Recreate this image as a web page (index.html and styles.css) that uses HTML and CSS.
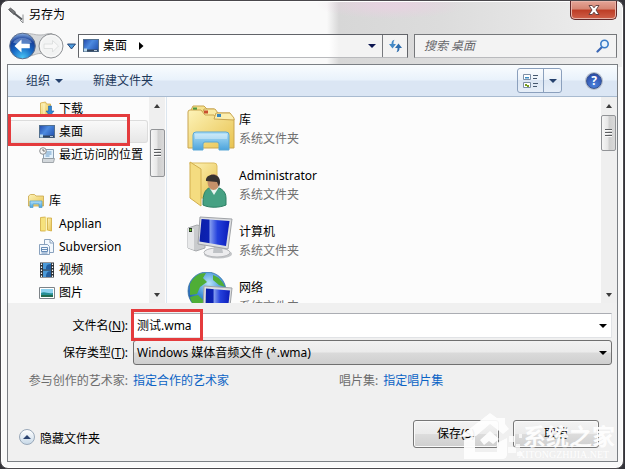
FILE: index.html
```html
<!DOCTYPE html>
<html lang="zh-CN">
<head>
  <meta charset="UTF-8" />
  <meta name="viewport" content="width=device-width, initial-scale=1.0" />
  <title>另存为</title>
  <link rel="stylesheet" href="styles.css">
</head>
<body>
  <!-- gradients and icons used more than once -->
  <svg class="defs" width="0" height="0">
    <defs>
      <linearGradient id="folder" x1="0" y1="0" x2="1" y2="1">
        <stop offset="0" stop-color="#fdf3b8" /><stop offset="1" stop-color="#e8c350" />
      </linearGradient>
      <linearGradient id="screen" x1="0" y1="0" x2="1" y2="0.6">
        <stop offset="0" stop-color="#2348a8" /><stop offset="0.5" stop-color="#4d8be0" /><stop offset="1" stop-color="#2a5cb8" />
      </linearGradient>
      <linearGradient id="monitor" x1="0" y1="0" x2="1" y2="0">
        <stop offset="0" stop-color="#0a1fa8" /><stop offset="0.3" stop-color="#0c22b4" /><stop offset="0.36" stop-color="#7f98ee" /><stop offset="0.6" stop-color="#2440dc" /><stop offset="1" stop-color="#0b1cb8" />
      </linearGradient>
      <linearGradient id="tray" x1="0" y1="0" x2="0" y2="1">
        <stop offset="0" stop-color="#b5e2f8" /><stop offset="1" stop-color="#4ba3dc" />
      </linearGradient>
      <radialGradient id="backBlue" cx="0.5" cy="0.95" r="0.95">
        <stop offset="0" stop-color="#48c4f4" /><stop offset="0.45" stop-color="#1767c4" /><stop offset="0.75" stop-color="#173f98" /><stop offset="1" stop-color="#8db2e4" />
      </radialGradient>
      <radialGradient id="globe" cx="0.55" cy="0.3" r="0.75">
        <stop offset="0" stop-color="#b8e4fa" /><stop offset="0.5" stop-color="#3f8fd8" /><stop offset="1" stop-color="#1a4d9c" />
      </radialGradient>
      <symbol id="desktop" viewBox="0 0 16 14">
        <rect x="0.5" y="0.5" width="15" height="12" fill="url(#screen)" stroke="#53708f" />
        <path d="M1 10.5h14v2H1z" fill="#33465e" />
        <path d="M1 9.500h3v3H1z" fill="#b9d9ee" />
        <path d="M11 11.500h3" stroke="#b8c8d8" />
      </symbol>
      <symbol id="computer" viewBox="0 0 48 44">
        <path d="M1 12l9-3 8 2v21l-9 3-8-3z" fill="#c9cbcd" stroke="#a6a9ac" />
        <path d="M1 12l6 1v21l-6-2z" fill="#e8e9ea" />
        <path d="M2 12h3v4H2z" fill="#263526" /><circle cx="3.500" cy="14" r="1" fill="#7edb3a" />
        <ellipse cx="31" cy="38" rx="14" ry="4.500" fill="#c3c5c8" />
        <ellipse cx="30" cy="36.500" rx="13" ry="4.500" fill="#ececee" stroke="#b4b6b9" />
        <path d="M27 29l8 2 1 6h-10z" fill="#bfc2c6" />
        <path d="M13 1l32 2-4 30-30-5z" fill="#dcdee1" stroke="#a0a3a7" />
        <path d="M14.500 3l28 2-3.500 25-26.500-4.500z" fill="url(#monitor)" />
      </symbol>
    </defs>
  </svg>

  <div class="window">
    <div class="titlebar">
      <svg class="mic" width="18" height="18" viewBox="0 0 18 18">
        <path d="M3 3l12 9.500" stroke="#55585c" stroke-width="2" />
        <path d="M1.500 2.500l2-1.500 5 4-1.500 2.500z" fill="#77797c" stroke="#3e4043" stroke-width="0.6" />
        <path d="M16 7.500v8.500l-3-3" stroke="#8b8e91" fill="none" />
      </svg>
      <span class="title">另存为</span>
      <button class="close" aria-label="关闭">
        <svg width="12" height="10" viewBox="0 0 12 10">
          <path d="M1 .5h3.200L6 2.800 7.800.5H11L8 5l3 4.500H7.800L6 7.200 4.200 9.500H1L4 5z" fill="#fff" stroke="#5a3a3a" stroke-width="0.9" />
        </svg>
      </button>
    </div>

    <div class="navbar">
      <svg class="nav-buttons" width="69" height="28" viewBox="0 0 69 28">
        <path d="M14 1.500c13 0 12 1.500 18 1.500s5-1.500 12-1.500v23c-7 0-7-3-12-3s-6 3-18 3z" fill="#d7d9db" stroke="#b3b5b8" />
        <circle cx="14.500" cy="14" r="12.800" fill="url(#backBlue)" stroke="#5b6c88" />
        <path d="M5 10.500a10.500 8 0 0 1 19 0c-5 2-14 2-19 0z" fill="#a9c4ec" opacity="0.45" />
        <path d="M6.500 14l7-6.500v4.300h8.300v4.400h-8.300v4.300z" fill="#fff" />
        <circle cx="43" cy="14" r="12" fill="#e9eaeb" stroke="#909396" />
        <circle cx="43" cy="14" r="10.500" fill="#f2f3f3" stroke="#fcfcfc" />
        <path d="M50.500 14l-6-5.500v3.500H36v4.500h8.500v3.500z" fill="#f8f8f8" stroke="#d8dadb" stroke-width="0.8" />
        <path d="M59.500 12h8l-4 5z" fill="#4e9bdc" stroke="#203c6c" stroke-width="0.9" />
      </svg>
      <div class="address">
        <svg width="16" height="14"><use href="#desktop" /></svg>
        <span class="crumb">桌面</span>
        <svg width="5" height="8" viewBox="0 0 5 8"><path d="M0 0l4.500 4L0 8z" fill="#000" /></svg>
        <i class="arrow navy address-arrow"></i>
        <span class="refresh">
          <svg width="15" height="14" viewBox="0 0 15 14">
            <path d="M6.500.8C4.500 1 3.500 2.500 3.500 5H1l3.500 4.500L8 5H5.500c0-2 .2-3 1-4.200z" fill="#4389c6" />
            <path d="M8.500 13.200c2-.2 3-1.700 3-4.200H14l-3.500-4.500L7 9h2.500c0 2-.2 3-1 4.200z" fill="#2e6dae" />
          </svg>
        </span>
      </div>
      <div class="search">
        <span>搜索 桌面</span>
        <svg width="14" height="14" viewBox="0 0 14 14">
          <path d="M1.500 12.500L6 8" stroke="#3a66b4" stroke-width="2.200" stroke-linecap="round" />
          <circle cx="8.500" cy="5" r="3.700" fill="#e8f3fc" stroke="#3a7cc8" stroke-width="1.600" />
        </svg>
      </div>
    </div>

    <div class="client">
      <div class="toolbar">
        <span>组织</span><i class="arrow blue"></i>
        <span class="new-folder">新建文件夹</span>
        <div class="view-button">
          <span class="view-icon">
            <svg width="16" height="16" viewBox="0 0 16 16">
              <path d="M.5 1.500h7v5h-7zM.5 9.500h7v5h-7z" fill="#fff" stroke="#7d8fa6" />
              <path d="M2 4h4v1.500H2z" fill="#3c8cc4" /><path d="M2 11h2v1h2v2H4v-1H2z" fill="#789d22" />
              <path d="M10 2.500h5M10 5.500h4M10 10.500h5M10 13.500h4" stroke="#46586e" />
            </svg>
          </span>
          <span class="view-drop"><i class="arrow blue"></i></span>
        </div>
        <span class="help">?</span>
      </div>

      <div class="browser">
        <ul class="tree">
          <li>
            <svg width="16" height="16" viewBox="0 0 16 16">
              <path d="M1.500 2l5-1 1 2h4v12h-10z" fill="url(#folder)" stroke="#d4aa42" stroke-width="0.8" />
              <path d="M5 3v12" stroke="#fff6c8" />
              <path d="M9.500 5h3v5h2.500l-4 5-4-5h2.500z" fill="#3187d2" stroke="#1f5fa6" stroke-width="0.6" />
            </svg>下载
          </li>
          <li class="selected"><svg width="16" height="14"><use href="#desktop" /></svg>桌面</li>
          <li>
            <svg width="16" height="16" viewBox="0 0 16 16">
              <path d="M4.500 2.500h10v9h-10z" fill="#e4f1fb" stroke="#8a9db0" />
              <path d="M6.500 5h6M6.500 7h6M6.500 9h4" stroke="#6b9cc8" />
              <path d="M3.500 11.500h12l-1 4h-11z" fill="#d3d8dc" stroke="#8d949b" stroke-width="0.8" />
              <circle cx="4" cy="4" r="3.300" fill="#f6f6f6" stroke="#8a8d90" /><path d="M4 2v2h2" fill="none" stroke="#555" stroke-width="0.8" />
            </svg>最近访问的位置
          </li>
          <li class="root">
            <svg width="16" height="16" viewBox="0 0 16 16">
              <path d="M.5 3l2-1.500h4L8 3h7.500v10H.5z" fill="url(#folder)" stroke="#c9a64a" stroke-width="0.8" />
              <path d="M2 8h12v6.500h-3V11H5v3.500H2z" fill="url(#tray)" stroke="#4d9ccd" stroke-width="0.7" />
            </svg>库
          </li>
          <li>
            <svg width="16" height="16" viewBox="0 0 16 16">
              <path d="M1.500 1.500l5-.5v14h-5z" fill="#f6e27c" stroke="#d0aa3c" stroke-width="0.8" />
              <path d="M6.500 1l3 .5v13.500h-3z" fill="#fdf4b8" /><path d="M8.500 2h4v13l-4-1z" fill="url(#folder)" stroke="#d0aa3c" stroke-width="0.8" />
            </svg>Applian
          </li>
          <li>
            <svg width="16" height="16" viewBox="0 0 16 16">
              <path d="M5.500.5h6l3 3v10h-9z" fill="#f3f8fd" stroke="#8aa2be" /><path d="M11 .5V4h3.500" fill="none" stroke="#8aa2be" />
              <path d="M.5 5.500h8l2 2v8H.5z" fill="#f3f8fd" stroke="#8aa2be" />
              <path d="M2.500 8.500h6v4h-6zM2.500 10.500h6M2.500 14h6" fill="none" stroke="#587fae" stroke-width="0.9" />
            </svg>Subversion
          </li>
          <li>
            <svg width="16" height="16" viewBox="0 0 16 16">
              <path d="M1 .5h14v15H1z" fill="#2d3136" />
              <path d="M4 1h8v6.500H4zM4 8.500h8V15H4z" fill="#4c9ad8" />
              <path d="M12 2c-5 0-5 3-5 5.500h5zM12 9c-4 0-5 3-5 6h5z" fill="#245e9e" />
              <path d="M2.500 1.500v14M13.500 1.500v14" stroke="#fff" stroke-width="1.200" stroke-dasharray="1.500 1.500" />
            </svg>视频
          </li>
          <li>
            <svg width="16" height="14" viewBox="0 0 16 14">
              <path d="M.5 1.500h15v11H.5z" fill="#fff" stroke="#7d8388" /><path d="M2 3h12v8H2z" fill="#8dd1ee" />
              <path d="M2 7c4-2 6 1 12 0v4H2z" fill="#268f95" /><path d="M2 9h12v2H2z" fill="#236c4f" />
            </svg>图片
          </li>
        </ul>
        <div class="scroll tree-scroll"><i class="up"></i><b class="thumb"></b><i class="down"></i></div>

        <div class="files">
          <div class="file">
            <svg width="48" height="48" viewBox="0 0 48 48">
              <path d="M4 6l2-4h11l3 3h7v10H4z" fill="#f6e28e" stroke="#c9a550" /><path d="M6 3.500h4v3H6z" fill="#4d9a41" />
              <path d="M15 10l2-5h11l3 4h12v8H15z" fill="#faeaa4" stroke="#c9a550" />
              <path d="M1 8q0-2 2-2h11l4 5h9l2 3h17l1 1v29H1z" fill="url(#folder)" stroke="#c9a550" />
              <path d="M27 15l2-6h14l4 5v2z" fill="#fbeeb0" stroke="#c9a550" />
              <path d="M17 6.500h4v3h-4z" fill="#c9502f" /><path d="M30 10h4v3h-4z" fill="#3988be" />
              <path d="M6 31q0-3 3-3h30q3 0 3 3v15H32v-6q0-2-2-2H18q-2 0-2 2v6H6z" fill="url(#tray)" stroke="#5aa7d5" />
              <path d="M8 30h32v5H8z" fill="#fff" opacity="0.35" />
            </svg>
            <div><p>库</p><p class="kind">系统文件夹</p></div>
          </div>
          <div class="file">
            <svg width="48" height="48" viewBox="0 0 48 48">
              <path d="M3 3h24q3 0 3 3v32H12z" fill="url(#folder)" stroke="#dbbb60" />
              <path d="M3 2l11 7v37L3 38z" fill="#f4dc80" stroke="#d2ae4c" />
              <path d="M16 42c0-13 6-15 11-15s12 3 12 11v7c-7 3-17 3-23 0z" fill="#46a183" stroke="#2c7e63" />
              <path d="M22 27l5 8 5-8z" fill="#e9f3ef" />
              <ellipse cx="26.500" cy="22" rx="6" ry="8" fill="#c69169" />
              <path d="M19 21c-1-8 15-9 14 2l-1 4-2-5c-4 0-7-1-11-1z" fill="#37322f" />
            </svg>
            <div><p>Administrator</p><p class="kind">系统文件夹</p></div>
          </div>
          <div class="file">
            <svg width="48" height="44"><use href="#computer" /></svg>
            <div><p>计算机</p><p class="kind">系统文件夹</p></div>
          </div>
          <div class="file">
            <svg width="48" height="48" viewBox="0 0 48 48">
              <circle cx="20" cy="19" r="19" fill="url(#globe)" stroke="#2d6a9c" stroke-width="0.7" />
              <path d="M3 12C7 4 12 1 19 1l-3 5 4 4-7 5-3 7-7 1zM26 3c6 2 10 7 12 12l-6-2-6-5zM3 25l8-2 6 6-3 7C8 35 4 31 3 25z" fill="#4fae36" />
              <path d="M17 14l28 2-3 27-26-4z" fill="#dcdee1" stroke="#a0a3a7" /><path d="M19 16.500l24 2-2.500 22-22-4z" fill="url(#monitor)" />
            </svg>
            <div><p>网络</p><p class="kind">系统文件夹</p></div>
          </div>
        </div>
        <div class="scroll file-scroll"><i class="up"></i><b class="thumb"></b><i class="down"></i></div>
      </div>

      <div class="form">
        <div class="field">
          <label>文件名(<u>N</u>):</label>
          <div class="input">测试.wma<i class="arrow"></i></div>
        </div>
        <div class="field">
          <label>保存类型(<u>T</u>):</label>
          <div class="input select">Windows 媒体音频文件 (*.wma)<i class="arrow"></i></div>
        </div>
        <div class="meta">
          <label>参与创作的艺术家:</label><a>指定合作的艺术家</a>
          <label class="album">唱片集:</label><a>指定唱片集</a>
        </div>
      </div>

      <div class="footer">
        <span class="hide-icon"><i></i></span>
        <span class="hide-text">隐藏文件夹</span>
        <div class="buttons">
          <button class="btn">保存(S)</button>
          <button class="btn">取消</button>
        </div>
      </div>
    </div>
  </div>

  <div class="mark mark-tree"></div>
  <div class="mark mark-name"></div>

  <div class="watermark">
    <svg width="68" height="48" viewBox="0 0 68 48">
      <path d="M0 24L31 0l7 5h8v6l4 5-6 5-13-10-14 12z" fill="#fff" />
      <path d="M5 27l11-4v16h22v-9l10-5v16q0 5-5 5H5z" fill="#fff" />
      <path d="M21 27l10-9 9 8-6 5-4-3-5 4z" fill="#fff" />
      <path d="M50 23h6v6h-6zM57 31h4v4h-4zM49 34h8v6h-8zM60 21h3v4h-3zM58 39h5v4h-5z" fill="#fff" opacity="0.8" />
    </svg>
    <div class="watermark-text"><strong>系统之家</strong><small>XITONGZHIJIA.NET</small></div>
  </div>
</body>
</html>
```

FILE: styles.css
```css
* {
  box-sizing: border-box;
}
html, body {
  margin: 0;
  width: 625px;
  height: 469px;
  overflow: hidden;
  background: #34343a;
  font: 12px/18px "Noto Sans", "Noto Sans CJK SC", sans-serif;
  color: #000;
}
body {
  position: relative;
}
ul, p {
  margin: 0;
  padding: 0;
  list-style: none;
}
button {
  font: inherit;
  padding: 0;
}
svg {
  display: block;
  flex: none;
}
.defs {
  position: absolute;
}
.window {
  width: 624px;
  height: 469px;
  border: 1px solid #4a484c;
  border-radius: 8px;
  padding: 0 6px 6px;
  box-shadow: inset 0 0 0 1px #fff;
  background:
    radial-gradient(ellipse 75px 14px at 390px 4px, rgba(234, 208, 226, 0.7) 20%, transparent),
    linear-gradient(90deg, transparent 326px, #d7d7d7 338px, #dcdcdc 440px, #e4e4e4 520px, #eee 610px) 0 0 / 100% 66px no-repeat,
    #f9f9f9;
}

/* title bar */
.titlebar {
  display: flex;
  align-items: flex-start;
  height: 32px;
}
.mic {
  margin: 6px 4px 0 0;
}
.title {
  margin-top: 5px;
}
.close {
  display: flex;
  align-items: center;
  justify-content: center;
  width: 47px;
  height: 19px;
  margin-left: auto;
  border: 1px solid #61292a;
  border-top: 0;
  border-radius: 0 0 5px 5px;
  background: linear-gradient(#e5a597, #d58573 45%, #bd3c25 50%, #cf604a);
  box-shadow: inset 0 0 0 1px #e8b4a9;
}

/* navigation */
.navbar {
  display: flex;
  height: 31px;
}
.nav-buttons {
  margin: -1px 0 0 1px;
}
.address {
  display: flex;
  align-items: center;
  width: 330px;
  height: 24px;
  margin: 1px 0 0 1px;
  padding-left: 4px;
  border: 1px solid #626469;
  border-bottom-color: #b9babd;
  background: linear-gradient(90deg, #fff 250px, #f3f3f3 260px);
}
.crumb {
  margin: 0 12px 0 4px;
}
.arrow {
  width: 0;
  border: 4px solid transparent;
  border-top-color: #000;
  border-bottom: 0;
}
.arrow.navy {
  border-top-color: #0b1550;
}
.arrow.blue {
  border-top-color: #25416d;
}
.address-arrow {
  margin-left: auto;
  margin-right: 6px;
}
.refresh {
  display: flex;
  align-items: center;
  justify-content: center;
  width: 25px;
  height: 22px;
  border-left: 1px solid #77797d;
}
.search {
  display: flex;
  align-items: center;
  justify-content: space-between;
  width: 203px;
  height: 24px;
  margin: 1px 0 0 6px;
  padding: 0 6px 0 9px;
  border: 1px solid #75777a;
  border-bottom-color: #b9babd;
  background: #f3f3f3;
  color: #68686c;
  font-style: italic;
}

/* client area */
.client {
  display: flex;
  flex-direction: column;
  width: 611px;
  height: 398px;
  border: 1px solid #7b7f84;
  background: #f0f0f0;
}
.toolbar {
  display: flex;
  align-items: center;
  height: 32px;
  flex: none;
  padding-left: 18px;
  border-bottom: 1px solid #a9bbd0;
  background: linear-gradient(#f9fcfe, #e9f2fb 48%, #dbe6f4 52%, #dbe6f4);
  color: #1e395b;
}
.toolbar > .arrow {
  margin-left: 5px;
}
.new-folder {
  margin-left: 30px;
}
.view-button {
  display: flex;
  width: 45px;
  height: 25px;
  margin-left: auto;
  border: 1px solid #8ba0bd;
  border-radius: 3px;
  background: linear-gradient(#fafcfe, #eaf1f9 50%, #dce6f3 50%, #e6eef8);
}
.view-icon, .view-drop {
  display: flex;
  align-items: center;
  justify-content: center;
}
.view-icon {
  width: 26px;
  border-right: 1px solid #8ba0bd;
}
.view-drop {
  flex: 1;
}
.help {
  width: 16px;
  height: 16px;
  margin: 0 15px 0 24px;
  border: 1px solid #39558f;
  border-radius: 50%;
  background: radial-gradient(circle at 50% 80%, #4c82dc, #25419d);
  box-shadow: 0 0 0 1px #b6bdc9;
  color: #fff;
  font-weight: bold;
  line-height: 14px;
  text-align: center;
}

/* folder tree and file list */
.browser {
  display: flex;
  height: 206px;
  flex: none;
  overflow: hidden;
  background: #fcfcfc;
}
.tree {
  width: 141px;
  flex: none;
}
.tree li {
  display: flex;
  align-items: center;
  gap: 4px;
  height: 23px;
  padding-left: 31px;
  white-space: nowrap;
}
.tree .root {
  margin-top: 23px;
  padding-left: 20px;
  gap: 5px;
}
.tree .selected {
  margin-right: 1px;
  border: 1px solid #dcdcdc;
  border-left: 0;
  border-radius: 3px;
  background: linear-gradient(#f9f9f9, #e7e7e7);
}
.scroll {
  display: flex;
  flex-direction: column;
  align-items: center;
  flex: none;
  width: 16px;
  background: #efefef;
}
.scroll .up, .scroll .down {
  width: 0;
  border: 3.5px solid transparent;
}
.scroll .up {
  margin-top: 7px;
  border-top: 0;
  border-bottom: 4px solid #3c3c3c;
}
.scroll .down {
  margin: auto 0 6px;
  border-bottom: 0;
  border-top: 4px solid #3c3c3c;
}
.thumb {
  display: flex;
  align-items: center;
  justify-content: center;
  width: 15px;
  border: 1px solid #929497;
  border-radius: 2px;
  background: linear-gradient(90deg, #f6f6f6, #e6e6e6 45%, #cfcfcf 55%, #d9d9d9);
}
.thumb::after {
  content: "";
  width: 7px;
  height: 8px;
  background: repeating-linear-gradient(#5c5e61 0 1px, #fafafa 1px 2px, transparent 2px 3px);
}
.tree-scroll .thumb {
  height: 48px;
  margin-top: 21px;
}
.file-scroll {
  padding-right: 1px;
}
.file-scroll .thumb {
  height: 36px;
  margin-top: 7px;
}
.files {
  flex: 1;
  margin-left: 1px;
  padding: 7px 0 0 20px;
  border-left: 1px solid #dce6ef;
}
.file {
  display: flex;
  gap: 4px;
  height: 56px;
}
.file p:first-child {
  margin-top: 7px;
}
.file .kind {
  margin-top: 1px;
  color: #707070;
}

/* name and type */
.form {
  padding: 9px 5px 0 0;
}
.field {
  display: flex;
  align-items: center;
  height: 27px;
}
.field label, .meta label:first-child {
  width: 120px;
  text-align: right;
}
.input {
  display: flex;
  align-items: center;
  flex: 1;
  height: 25px;
  margin-left: 5px;
  padding: 0 4px 0 3px;
  border: 1px solid #e1e3e6;
  border-top-color: #abadb3;
  background: #fff;
}
.select {
  border: 1px solid #707070;
  border-radius: 3px;
  background: linear-gradient(#f2f2f2, #ebebeb 48%, #dadada 52%, #cfcfcf);
}
.input .arrow {
  margin-left: auto;
}
.meta {
  display: flex;
  margin-top: 6px;
  color: #6d6d6d;
}
.meta a {
  margin-left: 5px;
  color: #0b63c5;
}
.meta .album {
  margin-left: 110px;
}

/* footer */
.footer {
  display: flex;
  align-items: center;
  height: 48px;
  margin-top: auto;
  padding: 0 18px 0 11px;
}
.hide-icon {
  display: flex;
  align-items: center;
  justify-content: center;
  width: 16px;
  height: 16px;
  margin-right: 5px;
  border: 1px solid #99a8b9;
  border-radius: 50%;
  background: linear-gradient(#fff, #c8d9e8);
}
.hide-icon i {
  border: 4px solid transparent;
  border-top: 0;
  border-bottom-color: #2b4370;
}
.hide-text {
  padding-top: 3px;
}
.buttons {
  display: flex;
  gap: 14px;
  margin: -7px 0 0 auto;
}
.btn {
  width: 86px;
  height: 28px;
  border: 1px solid #777;
  border-radius: 3px;
  background: linear-gradient(#f3f3f3, #ebebeb 48%, #dcdcdc 52%, #cfcfcf);
  box-shadow: inset 0 0 0 1px #fafafa;
  color: #000;
}

/* red highlight frames */
.mark {
  position: absolute;
  border: 3px solid #e43b3d;
}
.mark-tree {
  left: 8px;
  top: 114px;
  width: 122px;
  height: 32px;
}
.mark-name {
  left: 131px;
  top: 309px;
  width: 72px;
  height: 32px;
}

/* site watermark */
.watermark {
  position: absolute;
  left: 459px;
  top: 413px;
  display: flex;
  color: #fff;
  opacity: 0.93;
}
.watermark-text {
  padding-top: 9px;
  margin-left: -4px;
}
.watermark strong {
  display: block;
  font: bold 23px/27px "Noto Sans CJK SC", sans-serif;
}
.watermark small {
  display: block;
  margin-left: -5px;
  font: 10px/12px "Liberation Serif", serif;
  white-space: nowrap;
}
```
